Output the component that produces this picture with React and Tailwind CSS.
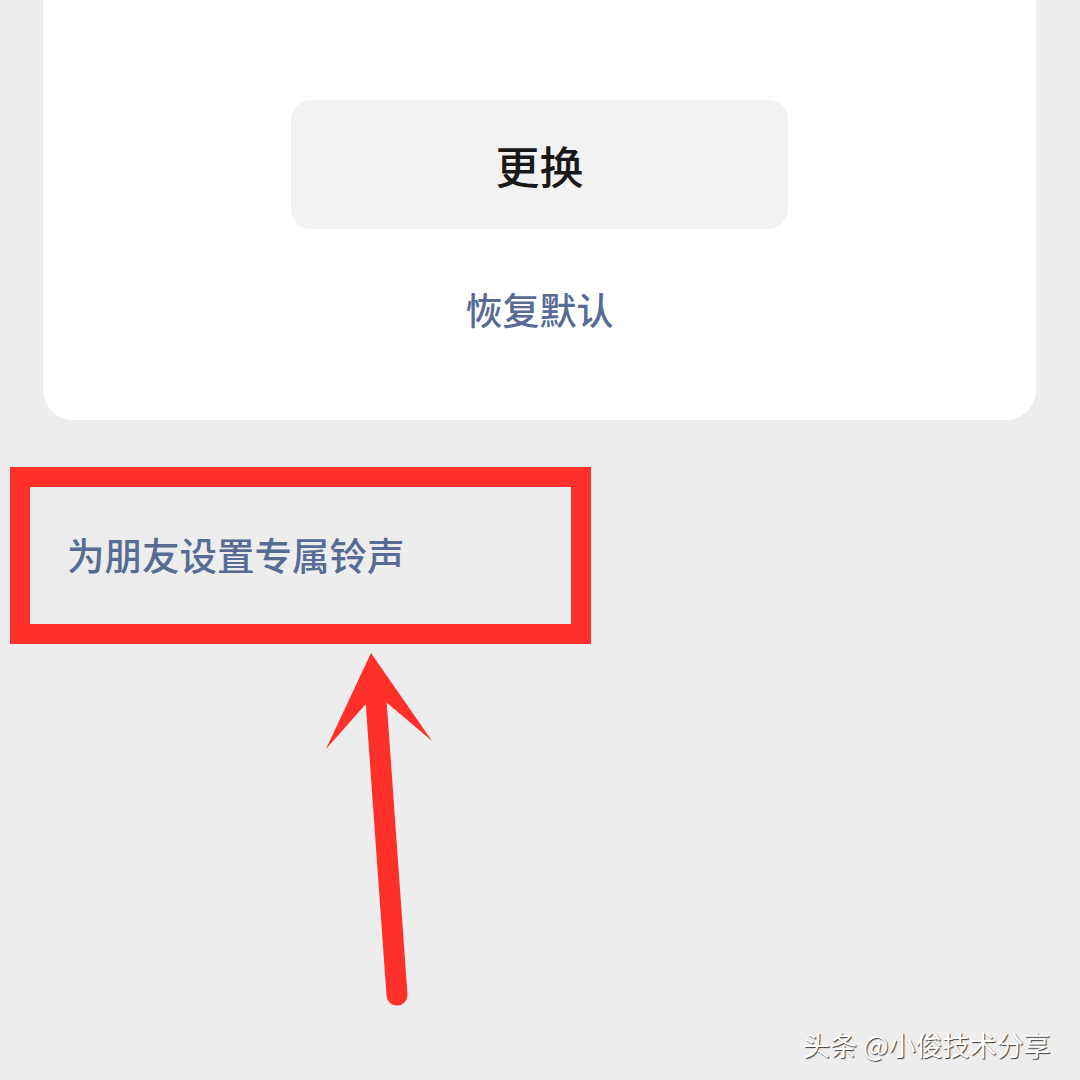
export default function App() {
  const font = { fontFamily: '"Noto Sans CJK SC", "Noto Sans", sans-serif' };

  return (
    <div
      className="relative w-[1080px] h-[1080px] overflow-hidden bg-[#ededed]"
      style={font}
    >
      {/* ringtone card */}
      <div className="ml-[43px] w-[993px] h-[420px] bg-white rounded-b-[30px] flex flex-col items-center pt-[100px]">
        <button className="w-[497px] h-[129px] rounded-[20px] bg-[#f2f2f2] text-[44px] font-medium text-[#191919] leading-none">
          更换
        </button>
        <div className="mt-[58px] text-[37px] leading-[44px] font-medium text-[#576b95]">
          恢复默认
        </div>
      </div>

      {/* link under card */}
      <div className="pl-[67px] pt-[112px] text-[37.5px] leading-[44px] font-medium text-[#576b95]">
        为朋友设置专属铃声
      </div>

      {/* annotation: red frame */}
      <div className="absolute left-[10px] top-[467px] w-[581px] h-[177px] border-[20px] border-[#ff3029]" />

      {/* annotation: arrow */}
      <svg
        className="absolute left-0 top-0"
        width="1080"
        height="1080"
        viewBox="0 0 1080 1080"
      >
        <line
          x1="376"
          y1="700"
          x2="397"
          y2="995"
          stroke="#ff3029"
          strokeWidth="21"
          strokeLinecap="round"
        />
        <polygon
          points="371,653 432,741 386,702 365,705 326,749"
          fill="#ff3029"
        />
      </svg>

      {/* watermark */}
      <div
        className="absolute left-[803px] top-[1027px] text-[27px] leading-[36px] text-white whitespace-nowrap"
        style={{ textShadow: "1px 1px 1px rgba(0,0,0,0.75)" }}
      >
        头条 @小俊技术分享
      </div>
    </div>
  );
}
